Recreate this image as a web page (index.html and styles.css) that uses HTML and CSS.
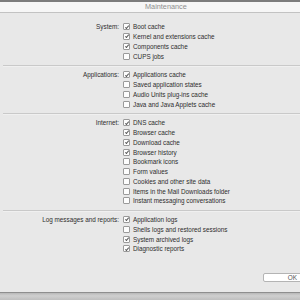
FILE: index.html
```html
<!DOCTYPE html>
<html lang="en">
<head>
    <meta charset="UTF-8">
    <title>Maintenance</title>
    <link rel="stylesheet" href="styles.css">
</head>
<body>
    <div class="window">
        <div class="titlebar"><span class="title">Maintenance</span></div>
        <div class="content">
            <div class="group">
                <div class="group-label">System:</div>
                <ul class="options">
                    <li class="option"><span class="check on"></span>Boot cache</li>
                    <li class="option"><span class="check on"></span>Kernel and extensions cache</li>
                    <li class="option"><span class="check on"></span>Components cache</li>
                    <li class="option"><span class="check"></span>CUPS jobs</li>
                </ul>
            </div>
            <div class="separator"></div>
            <div class="group">
                <div class="group-label">Applications:</div>
                <ul class="options">
                    <li class="option"><span class="check on"></span>Applications cache</li>
                    <li class="option"><span class="check"></span>Saved application states</li>
                    <li class="option"><span class="check"></span>Audio Units plug-ins cache</li>
                    <li class="option"><span class="check"></span>Java and Java Applets cache</li>
                </ul>
            </div>
            <div class="separator"></div>
            <div class="group">
                <div class="group-label">Internet:</div>
                <ul class="options">
                    <li class="option"><span class="check on"></span>DNS cache</li>
                    <li class="option"><span class="check on"></span>Browser cache</li>
                    <li class="option"><span class="check on"></span>Download cache</li>
                    <li class="option"><span class="check on"></span>Browser history</li>
                    <li class="option"><span class="check"></span>Bookmark icons</li>
                    <li class="option"><span class="check"></span>Form values</li>
                    <li class="option"><span class="check"></span>Cookies and other site data</li>
                    <li class="option"><span class="check"></span>Items in the Mail Downloads folder</li>
                    <li class="option"><span class="check"></span>Instant messaging conversations</li>
                </ul>
            </div>
            <div class="separator"></div>
            <div class="group">
                <div class="group-label">Log messages and reports:</div>
                <ul class="options">
                    <li class="option"><span class="check on"></span>Application logs</li>
                    <li class="option"><span class="check"></span>Shells logs and restored sessions</li>
                    <li class="option"><span class="check on"></span>System archived logs</li>
                    <li class="option"><span class="check on"></span>Diagnostic reports</li>
                </ul>
            </div>
        </div>
        <div class="footer">
            <button class="ok">OK</button>
        </div>
    </div>
    <div class="desk"></div>
</body>
</html>
```

FILE: styles.css
```css
html, body {
    margin: 0;
    padding: 0;
    width: 300px;
    height: 300px;
    overflow: hidden;
}
body {
    font-family: "Liberation Sans", Arial, sans-serif;
    background: #c4c4c4;
    color: #2e2e2e;
}
.window {
    height: 290px;
    display: flex;
    flex-direction: column;
    background: #e8e8e8;
    border-top: 2px solid #7c7c7c;
    border-bottom: 1px solid #8e8e8e;
}
.titlebar {
    height: 10px;
    background: #f6f6f6;
    border-bottom: 1px solid #c2c2c2;
    display: flex;
    align-items: center;
    padding-left: 145px;
}
.title {
    font-size: 7.3px;
    color: #8e8e8e;
    line-height: 10px;
}

/* Check groups */
.content {
    flex: 1;
    padding-top: 9px;
}
.group {
    display: flex;
    align-items: flex-start;
}
.group-label {
    width: 119px;
    text-align: right;
    font-size: 6.35px;
    line-height: 9.75px;
    white-space: nowrap;
}
.options {
    list-style: none;
    margin: 0 0 0 4px;
    padding: 0;
}
.option {
    display: flex;
    align-items: center;
    height: 9.75px;
    font-size: 6.35px;
    white-space: nowrap;
}
.check {
    position: relative;
    width: 5px;
    height: 5px;
    margin-right: 3px;
    background: #fdfdfd;
    border: 0.8px solid #9a9a9a;
    border-radius: 1px;
    flex: none;
}
.check.on::after {
    content: "";
    position: absolute;
    left: 1.6px;
    top: 0.2px;
    width: 1.4px;
    height: 3px;
    border-right: 0.9px solid #555;
    border-bottom: 0.9px solid #555;
    transform: rotate(40deg);
}
.separator {
    margin: 4px 0 4px 3px;
    height: 0;
    border-top: 1px solid #c9c9c9;
    box-shadow: 0 1px 0 #f0f0f0;
}

.footer {
    display: flex;
    justify-content: flex-end;
    padding-bottom: 10px;
}
.ok {
    width: 40px;
    height: 9px;
    margin-right: -3px;
    padding: 0 5px 0 0;
    background: #ffffff;
    border: 1px solid #b4b4b4;
    border-radius: 2px;
    font-family: "Liberation Sans", Arial, sans-serif;
    font-size: 6.4px;
    color: #555;
    text-align: right;
    line-height: 7px;
}
.desk {
    height: 7px;
    background: linear-gradient(#b8b8b8, #cfcfcf 40%, #bfbfbf);
}
```
